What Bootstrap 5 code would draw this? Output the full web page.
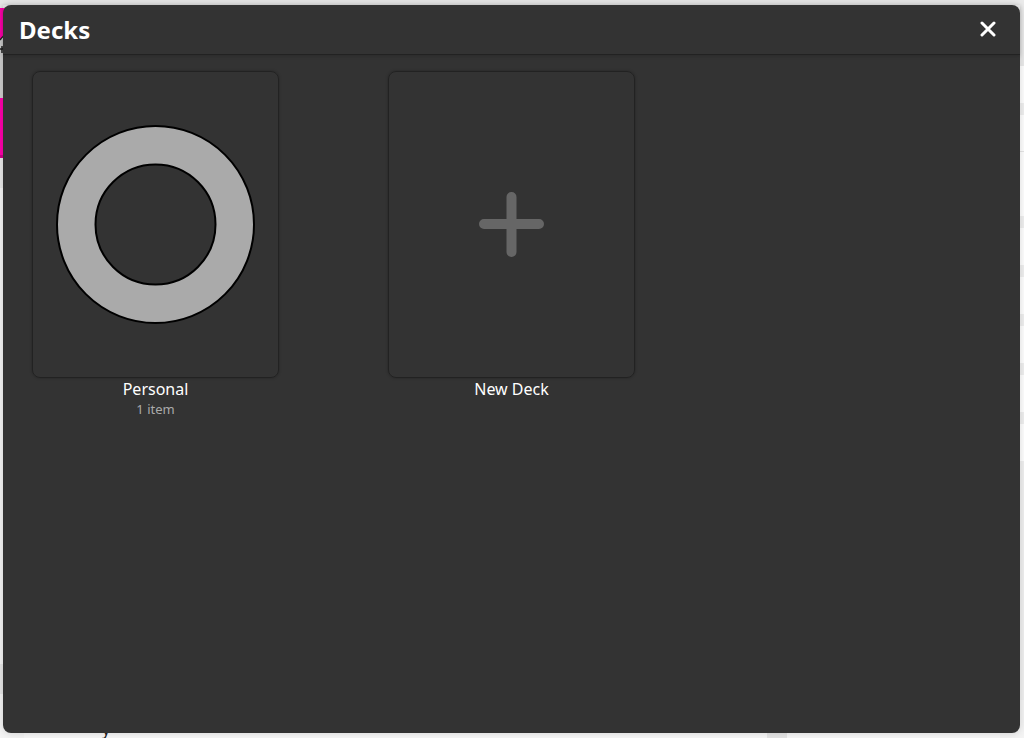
<!DOCTYPE html>
<html lang="en">
<head>
<meta charset="utf-8">
<meta name="viewport" content="width=device-width, initial-scale=1">
<title>Decks</title>
<link href="https://cdn.jsdelivr.net/npm/bootstrap@5.3.0/dist/css/bootstrap.min.css" rel="stylesheet">
<style>
  body { font-family: "Noto Sans", "Open Sans", sans-serif; background: #e6e6e6; }
  .edge { width: 24px; }
  .edge-left { padding-top: 33px; background: linear-gradient(#e6e6e6 0 8px, #f0a 8px 33px, #ccc 33px 98px, #f0a 98px 155px, #c08 155px 158px, #e8e8e8 158px 188px, #f4f4f4 188px 664px, #e6e6e6 664px 694px, #f4f4f4 694px); }
  .edge-right { background: linear-gradient(#ebebeb 0 66px, #fff 66px 103px, #f0f0f0 103px 115px, #fff 115px 151px, #e6e6e6 151px 152px, #fff 152px 216px, #f0f0f0 216px 228px, #fff 228px 265px, #f0f0f0 265px 277px, #fff 277px 314px, #f0f0f0 314px 326px, #fff 326px 363px, #f0f0f0 363px 375px, #fff 375px 412px, #f0f0f0 412px 424px, #fff 424px 461px, #f0f0f0 461px 700px, #f4f4f4 700px); }
  .page-foot { height: 18px; padding-left: 78px; font-size: 16px; line-height: 18px; color: #222; background: linear-gradient(90deg, #f8f8f8 0 calc(75% + 11px), #e6e6e6 calc(75% + 11px) calc(75% + 31px), #f8f8f8 calc(75% + 31px)); }
  .overlay { padding: 5px 4px 5px 3px; }
  .dialog { background: #333; color: #fff; border-radius: 8px; box-shadow: 0 0 8px rgba(0,0,0,.16); }
  .dialog-head { height: 50px; padding: 0 16px; border-bottom: 1px solid #222; box-shadow: 0 1px 4px rgba(0,0,0,.2); }
  .dialog-head h1 { font-size: 24px; line-height: 32px; font-weight: 700; }
  .close-btn { width: 32px; height: 34px; padding: 0 0 2px; }
  .deck-grid { display: grid; grid-template-columns: repeat(auto-fill, 247px); justify-content: space-between; padding: 16px 29px; row-gap: 16px; }
  .deck { color: #fff; }
  .deck-face { height: 307px; border: 1px solid #222; border-radius: 8px; box-shadow: 0 0 3px rgba(0,0,0,.3); }
  .deck-name { font-size: 16px; line-height: 22px; }
  .deck-count { font-size: 13px; line-height: 18px; color: #aaa; }
</style>
</head>
<body class="min-vh-100 overflow-hidden">
<div class="position-absolute top-0 start-0 w-100 h-100 d-flex overflow-hidden" aria-hidden="true">
  <div class="edge edge-left">
    <svg class="d-block" width="8" height="24" viewBox="0 0 8 24" fill="none" stroke="#222" stroke-width="1.500"><path d="M0 0h8v2Q3 3 0 7z" fill="#f0a" stroke="none"/><path d="M5 2Q2 4 0 7M5 14L1 17M0 16h5M2 13v7"/></svg>
  </div>
  <div class="flex-grow-1 d-flex flex-column justify-content-end"><div class="page-foot">y</div></div>
  <div class="edge edge-right"></div>
</div>
<main class="overlay position-relative vh-100 d-flex">
  <section class="dialog flex-grow-1 d-flex flex-column" role="dialog" aria-labelledby="decks-title">
    <header class="dialog-head d-flex align-items-center justify-content-between">
      <h1 id="decks-title" class="m-0">Decks</h1>
      <button type="button" class="close-btn btn border-0 d-flex align-items-center justify-content-center" aria-label="Close">
        <svg width="16" height="16" viewBox="0 0 16 16" fill="none" stroke="#fff" stroke-width="3" stroke-linecap="round"><path d="M2 2l12 12M14 2L2 14"/></svg>
      </button>
    </header>
    <div class="deck-grid">
      <a href="#personal" class="deck text-center text-decoration-none">
        <div class="deck-face d-flex align-items-center justify-content-center">
          <svg width="199" height="199" viewBox="0 0 199 199" stroke="#000" stroke-width="2"><circle cx="99.500" cy="99.500" r="98.500" fill="#aaa"/><circle cx="99.500" cy="99.500" r="60" fill="#333"/></svg>
        </div>
        <div class="deck-name">Personal</div>
        <div class="deck-count">1 item</div>
      </a>
      <a href="#new" class="deck text-center text-decoration-none">
        <div class="deck-face d-flex align-items-center justify-content-center">
          <svg width="65" height="65" viewBox="0 0 65 65" stroke="#666" stroke-width="10" stroke-linecap="round"><path d="M5 32h55M32.500 5v55"/></svg>
        </div>
        <div class="deck-name">New Deck</div>
      </a>
    </div>
  </section>
</main>
<script src="https://cdn.jsdelivr.net/npm/bootstrap@5.3.0/dist/js/bootstrap.bundle.min.js"></script>
</body>
</html>
